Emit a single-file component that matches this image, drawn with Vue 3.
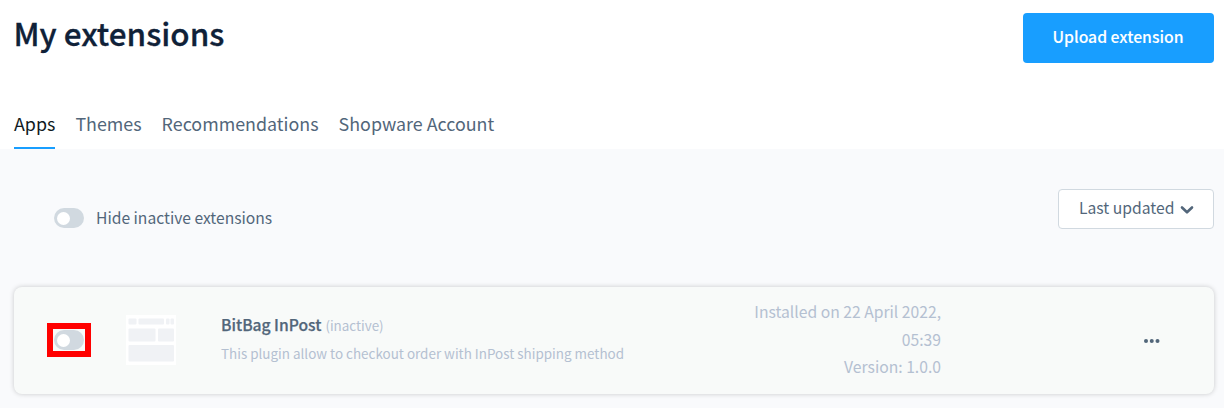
<script setup>
const tabs = ['Apps', 'Themes', 'Recommendations', 'Shopware Account']
const active = 'Apps'
</script>

<template>
  <main class="page">
    <header class="head">
      <h1>My extensions</h1>
      <button class="upload">Upload extension</button>
    </header>
    <nav class="tabs">
      <a v-for="tab in tabs" :key="tab" class="tab" :class="{ active: tab === active }">{{ tab }}</a>
    </nav>
    <section class="content">
      <div class="filters">
        <label class="filter"><span class="switch"></span><span class="label">Hide inactive extensions</span></label>
        <button class="sort">
          <span>Last updated</span>
          <svg width="14" height="10" viewBox="0 0 14 10"><path d="M2 2.5 7 7.3 12 2.5" fill="none" stroke="#52667a" stroke-width="2.6" stroke-linecap="round" stroke-linejoin="round" /></svg>
        </button>
      </div>
      <article class="card">
        <div class="mark"><span class="switch"></span></div>
        <svg class="thumb" width="50" height="50" viewBox="0 0 50 50">
          <rect width="50" height="50" fill="#fff" />
          <g fill="#f0f2f5">
            <rect x="2.5" y="3.5" width="8" height="6" rx="1" />
            <rect x="12.5" y="3.5" width="25.5" height="6" rx="1" />
            <rect x="40" y="3.5" width="3.5" height="6" rx="1" />
            <rect x="44.5" y="3.5" width="3.5" height="6" rx="1" />
            <rect x="2.5" y="13.5" width="27" height="13" rx="1" />
            <rect x="32" y="13.5" width="16" height="13" rx="1" />
            <rect x="2.5" y="30" width="45.5" height="16.5" rx="1" />
          </g>
        </svg>
        <div class="info">
          <div class="name"><strong>BitBag InPost</strong><span class="state">(inactive)</span></div>
          <div class="desc">This plugin allow to checkout order with InPost shipping method</div>
        </div>
        <div class="meta">
          <div>Installed on 22 April 2022,</div>
          <div>05:39</div>
          <div>Version: 1.0.0</div>
        </div>
        <svg class="more" width="16" height="4" viewBox="0 0 16 4" fill="#52667a"><circle cx="2" cy="2" r="2" /><circle cx="7.75" cy="2" r="2" /><circle cx="13.5" cy="2" r="2" /></svg>
      </article>
    </section>
  </main>
</template>

<style>
body { margin: 0; background: #fff; overflow: hidden; }
</style>

<style scoped>
* { box-sizing: border-box; }
.page {
  width: 1224px;
  height: 408px;
  display: flex;
  flex-direction: column;
  overflow: hidden;
  font-family: "Noto Sans CJK SC", "Noto Sans", sans-serif;
  font-size: 15.65px;
  color: #52667a;
  white-space: nowrap;
}
.head {
  height: 102px;
  padding: 13px 10px 0 14px;
  display: flex;
  justify-content: space-between;
  align-items: flex-start;
}
h1 { margin: 0 0 0 -0.5px; font-size: 31.45px; line-height: 40px; font-weight: 500; color: #0f2138; -webkit-text-stroke: 0.3px #0f2138; }
button { font-family: inherit; padding: 0; margin: 0; }
.upload {
  width: 191px;
  height: 50px;
  border: 0;
  border-radius: 4px;
  background: #189eff;
  color: #fff;
  font-size: 15.75px;
  font-weight: 500;
  padding: 0 1px 3px 0;
  -webkit-text-stroke: 0.1px #fff;
}
.tabs { height: 47px; padding-left: 14px; display: flex; gap: 20px; }
.tab { height: 47px; line-height: 42px; font-size: 17.88px; border-bottom: 2px solid transparent; }
.tab.active { color: #111a22; border-color: #189eff; }
.content { flex: 1; background: #f9fafc; padding: 40px 10px 0 14px; }
.filters { display: flex; justify-content: space-between; height: 98px; padding-left: 40px; }
.filter { display: flex; align-items: center; height: 58px; }
.switch { width: 30px; height: 20px; border-radius: 10px; background: #d1d9e0; padding: 3.5px 3px; flex: none; }
.switch::before { content: ""; display: block; width: 13px; height: 13px; border-radius: 50%; background: #fff; }
.label { margin-left: 12px; padding-bottom: 2px; }
.sort {
  width: 156px;
  height: 40px;
  display: flex;
  align-items: center;
  padding: 0 0 3px 20px;
  gap: 6px;
  border: 1px solid #d1d9e0;
  border-radius: 4px;
  background: #fff;
  color: #52667a;
  font-size: 15.7px;
}
.sort svg { margin-top: 4px; }
.card {
  height: 107px;
  padding-bottom: 1px;
  display: flex;
  align-items: center;
  border-radius: 8px;
  background: #f8faf9;
  box-shadow: 0 0 5px rgba(0, 0, 0, 0.2);
}
.mark { width: 44px; height: 34px; margin-left: 33px; border: 6px solid #f00; padding: 1px; display: flex; }
.thumb { margin-left: 35px; }
.info { width: 440px; margin-left: 45px; height: 56px; }
.name { display: flex; height: 28px; line-height: 26px; }
strong { font-weight: 500; -webkit-text-stroke: 0.25px #52667a; }
.state { font-size: 13.4px; margin-left: 4px; line-height: 26px; color: #b4c0d1; }
.desc { font-size: 13.45px; line-height: 27px; color: #b4c0d1; }
.meta { width: 280px; padding-bottom: 1px; text-align: right; line-height: 27.5px; color: #b4c0d1; font-size: 15.7px; }
.more { margin: 2px 0 0 203px; }
</style>
